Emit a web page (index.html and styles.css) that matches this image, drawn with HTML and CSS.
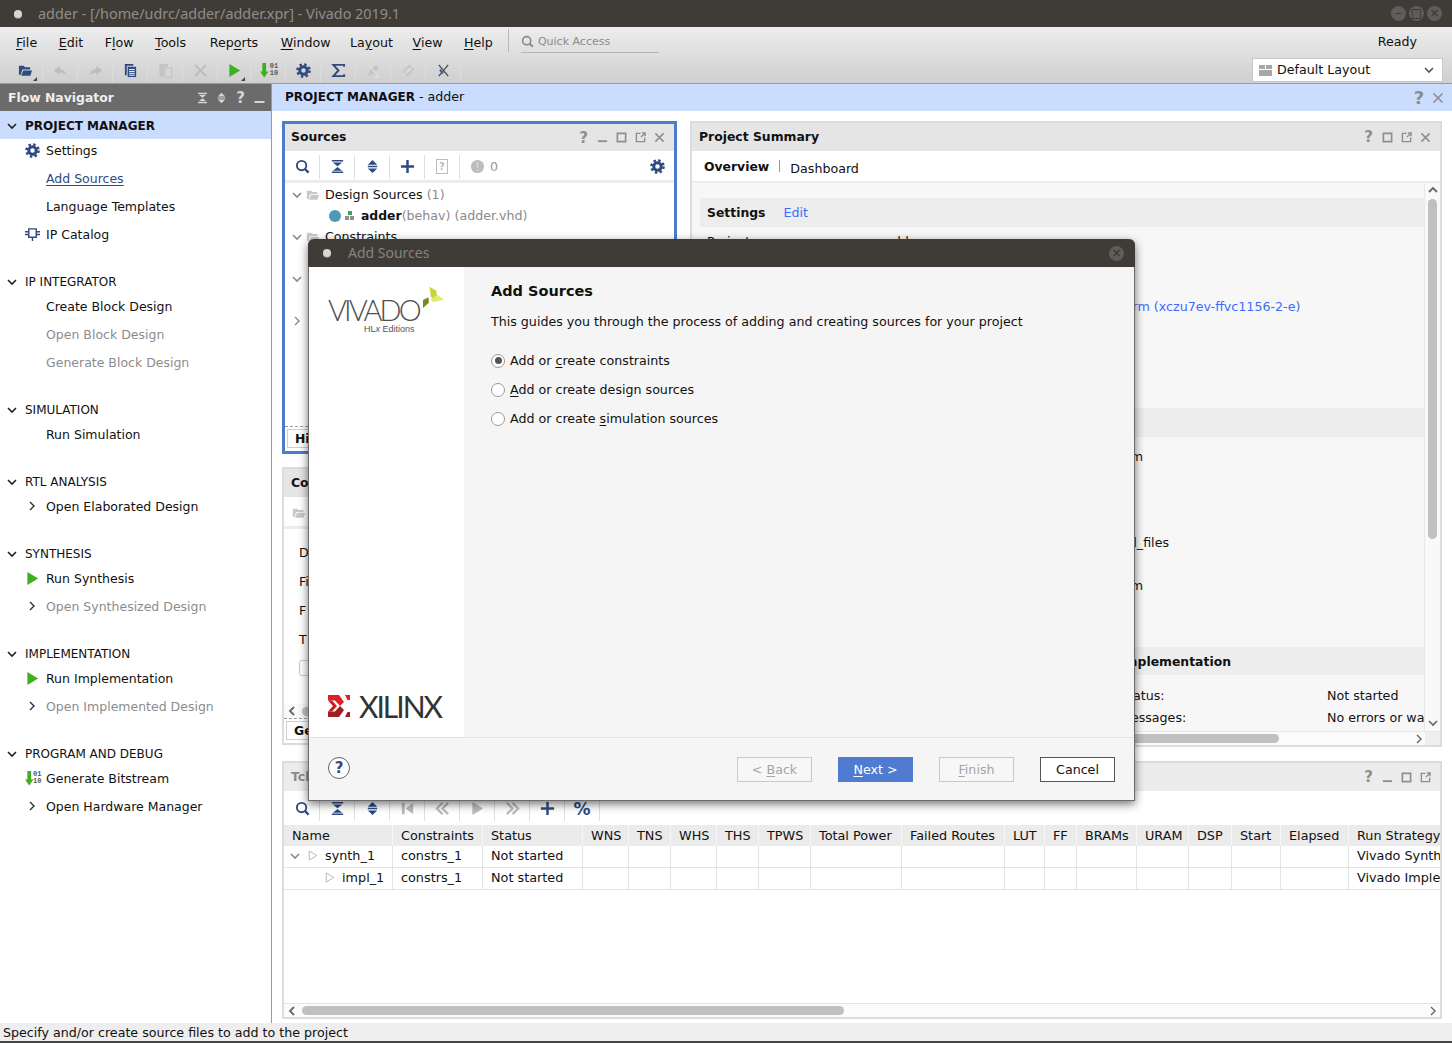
FILE: index.html
```html
<!DOCTYPE html>
<html>
<head>
    <title>adder - Vivado 2019.1</title>
    <link rel="stylesheet" href="styles.css">
</head>
<body>
    <svg class="defs" width="0" height="0">
        <symbol id="i-gear" viewBox="0 0 16 16"><circle cx="8" cy="8" r="4" fill="none" stroke="currentColor" stroke-width="3.2"/><circle cx="8" cy="8" r="6.5" fill="none" stroke="currentColor" stroke-width="2.6" stroke-dasharray="2.6 2.5"/></symbol>
        <symbol id="i-search" viewBox="0 0 16 16"><circle cx="7" cy="7" r="5" fill="none" stroke="currentColor" stroke-width="2"/><path d="M10.5 10.5L14.5 14.5" stroke="currentColor" stroke-width="2.4"/></symbol>
        <symbol id="i-collapse" viewBox="0 0 16 16"><path d="M2 1h12v1.6H2zM3 3.6h10L8 7.6zM3 12.4h10L8 8.4zM2 13.4h12v1.6H2z" fill="currentColor"/></symbol>
        <symbol id="i-expand" viewBox="0 0 16 16"><path d="M3 6L8 1l5 5zM3 7.2h10v1.6H3zM3 10h10l-5 5z" fill="currentColor"/></symbol>
        <symbol id="i-plus" viewBox="0 0 16 16"><path d="M6.7 1h2.6v5.7H15v2.6H9.3V15H6.7V9.3H1V6.7h5.7z" fill="currentColor"/></symbol>
        <symbol id="i-warn" viewBox="0 0 16 16"><circle cx="8" cy="8" r="7" fill="#bdbdbd"/><path d="M7.2 3.5h1.6v6H7.2zM7.2 10.8h1.6v1.7H7.2z" fill="#d8d8d8"/></symbol>
        <symbol id="i-folder" viewBox="0 0 16 16"><path d="M1 3h5l1.5 1.5H13V7H4.5L3 12.5H1z" fill="currentColor"/><path d="M5.5 8H15l-1.8 5.5H3.5z" fill="currentColor"/></symbol>
        <symbol id="i-undo" viewBox="0 0 16 16"><path d="M7 3L1 8l6 5v-3c3 0 5 .8 7 3-.5-4-3-6.5-7-7z" fill="currentColor"/></symbol>
        <symbol id="i-redo" viewBox="0 0 16 16"><path d="M9 3l6 5-6 5v-3c-3 0-5 .8-7 3 .5-4 3-6.5 7-7z" fill="currentColor"/></symbol>
        <symbol id="i-doc" viewBox="0 0 16 16"><path d="M2 1h9v2H4v10H2z" fill="currentColor"/><path d="M5 4h9v11H5z" fill="currentColor"/><path d="M6.5 7h6M6.5 9h6M6.5 11h6M6.5 13h6" stroke="#fff"/></symbol>
        <symbol id="i-paste" viewBox="0 0 16 16"><path d="M1.5 1h9v3H6v10H1.5z" fill="#c4c4c4"/><path d="M7 5h7.5v10H7z" fill="#d6d6d6" stroke="#c0c0c0"/></symbol>
        <symbol id="i-x" viewBox="0 0 16 16"><path d="M2 2l12 12M14 2L2 14" stroke="currentColor" stroke-width="2.2" fill="none"/></symbol>
        <symbol id="i-play" viewBox="0 0 16 16"><path d="M2.5 1l11.5 7-11.5 7z" fill="currentColor"/></symbol>
        <symbol id="i-sigma" viewBox="0 0 16 16"><path d="M14 4V2H2.500L8 8l-5.500 6H14v-2" fill="none" stroke="currentColor" stroke-width="2"/></symbol>
        <symbol id="i-check" viewBox="0 0 16 16"><path d="M2 14l3-7 6-5 3 3-5 6z" fill="#c6c6c6"/><path d="M9 15h6M3 3l10 10" stroke="#dedede" stroke-width="1.500"/></symbol>
        <symbol id="i-slash" viewBox="0 0 16 16"><path d="M3 9l6-6 4 4-6 6z" fill="none" stroke="#c6c6c6" stroke-width="2"/><path d="M2 14L14 2" stroke="#d8d8d8" stroke-width="1.500"/></symbol>
        <symbol id="i-probe" viewBox="0 0 16 16"><path d="M3 2l10 12M13 2L3 14" stroke="#555" stroke-width="1.600"/><path d="M5 6l3.500 4-2 2-3-4z" fill="#3f63a8"/></symbol>
        <symbol id="i-ipcat" viewBox="0 0 16 16"><path d="M4 2h8v9H4z" fill="none" stroke="currentColor" stroke-width="1.500"/><path d="M0 5h4M12 5h4M0 8h4M12 8h4M8 11v4" stroke="currentColor" stroke-width="1.500"/></symbol>
        <symbol id="i-down" viewBox="0 0 12 12"><path d="M2 4l4 4 4-4" fill="none" stroke="currentColor" stroke-width="1.600"/></symbol>
        <symbol id="i-right" viewBox="0 0 12 12"><path d="M4 2l4 4-4 4" fill="none" stroke="currentColor" stroke-width="1.400"/></symbol>
        <symbol id="i-left" viewBox="0 0 12 12"><path d="M8 2L4 6l4 4" fill="none" stroke="currentColor" stroke-width="1.800"/></symbol>
        <symbol id="i-up" viewBox="0 0 12 12"><path d="M2 8l4-4 4 4" fill="none" stroke="currentColor" stroke-width="1.800"/></symbol>
        <symbol id="i-min" viewBox="0 0 12 12"><path d="M1 10h10" stroke="currentColor" stroke-width="2"/></symbol>
        <symbol id="i-max" viewBox="0 0 12 12"><path d="M1.500 1.500h9v9h-9z" fill="none" stroke="currentColor" stroke-width="1.800"/></symbol>
        <symbol id="i-float" viewBox="0 0 12 12"><path d="M6 1.500H1.500v9h9V6M7.500 1h3.500v3.500M11 1L6.500 5.500" fill="none" stroke="currentColor" stroke-width="1.500"/></symbol>
        <symbol id="i-tri" viewBox="0 0 12 14"><path d="M1.500 1.500L10.500 7l-9 5.500z" fill="none" stroke="#aaa"/></symbol>
        <symbol id="i-rew" viewBox="0 0 16 16"><path d="M8 2L2 8l6 6M14 2L8 8l6 6" fill="none" stroke="currentColor" stroke-width="2.400"/></symbol>
        <symbol id="i-ff" viewBox="0 0 16 16"><path d="M2 2l6 6-6 6M8 2l6 6-6 6" fill="none" stroke="currentColor" stroke-width="2.400"/></symbol>
        <symbol id="i-first" viewBox="0 0 16 16"><path d="M2 2h3v12H2zM14 2v12L6 8z" fill="currentColor"/></symbol>
        <symbol id="i-layout" viewBox="0 0 13 11"><path d="M0 0h6v4H0zM7 0h6v4H7zM0 5h13v6H0z" fill="#a8a8a8"/></symbol>
        <symbol id="i-arrow" viewBox="0 0 16 16"><path d="M2.500 0h4v9h2.500l-4.500 6.500L0 9h2.500z" fill="#3cb01f"/></symbol>
    </svg>

    <div class="titlebar">
        <span class="app-dot"></span>
        <span class="title-text">adder - [/home/udrc/adder/adder.xpr] - Vivado 2019.1</span>
        <div class="win-controls">
            <span class="win-circle">&#8211;</span>
            <span class="win-circle">&#9633;</span>
            <span class="win-circle">&#215;</span>
        </div>
    </div>

    <div class="top">
        <div class="menubar">
            <span><u>F</u>ile</span>
            <span><u>E</u>dit</span>
            <span>F<u>l</u>ow</span>
            <span><u>T</u>ools</span>
            <span>Rep<u>o</u>rts</span>
            <span><u>W</u>indow</span>
            <span>La<u>y</u>out</span>
            <span><u>V</u>iew</span>
            <span><u>H</u>elp</span>
            <span class="menu-sep"></span>
            <span class="quick"><svg class="ic-quick"><use href="#i-search"/></svg> Quick Access</span>
            <span class="ready">Ready</span>
        </div>
        <div class="toolbar">
            <span class="tool navy corner"><svg><use href="#i-folder"/></svg></span>
            <span class="tool off"><svg><use href="#i-undo"/></svg></span>
            <span class="tool off"><svg><use href="#i-redo"/></svg></span>
            <span class="tool navy"><svg><use href="#i-doc"/></svg></span>
            <span class="tool"><svg><use href="#i-paste"/></svg></span>
            <span class="tool off"><svg><use href="#i-x"/></svg></span>
            <span class="tool corner green tight"><svg><use href="#i-play"/></svg></span>
            <span class="tool bits-tool"><svg class="bits-arrow"><use href="#i-arrow"/></svg><span class="bits"><i>01</i><i>10</i></span></span>
            <span class="tool navy"><svg><use href="#i-gear"/></svg></span>
            <span class="tool navy"><svg><use href="#i-sigma"/></svg></span>
            <span class="tool"><svg><use href="#i-check"/></svg></span>
            <span class="tool"><svg><use href="#i-slash"/></svg></span>
            <span class="tool"><svg><use href="#i-probe"/></svg></span>
            <div class="layout-select">
                <svg class="ic-layout"><use href="#i-layout"/></svg>
                <span>Default Layout</span>
                <svg class="ic-chev"><use href="#i-down"/></svg>
            </div>
        </div>
    </div>

    <div class="main">
        <div class="nav">
            <div class="nav-head">
                <span class="nav-title">Flow Navigator</span>
                <span class="btn-row">
                    <svg class="btn"><use href="#i-collapse"/></svg>
                    <svg class="btn"><use href="#i-expand"/></svg>
                    <b class="btn q">?</b>
                    <svg class="btn"><use href="#i-min"/></svg>
                </span>
            </div>

            <div class="nav-sec active"><svg class="sec-chev"><use href="#i-down"/></svg>PROJECT MANAGER</div>
            <div class="nav-item"><svg class="nav-ic navy"><use href="#i-gear"/></svg>Settings</div>
            <div class="nav-item link"><span class="lnk">Add Sources</span></div>
            <div class="nav-item">Language Templates</div>
            <div class="nav-item"><svg class="nav-ic navy"><use href="#i-ipcat"/></svg>IP Catalog</div>

            <div class="nav-sec"><svg class="sec-chev"><use href="#i-down"/></svg>IP INTEGRATOR</div>
            <div class="nav-item">Create Block Design</div>
            <div class="nav-item dim">Open Block Design</div>
            <div class="nav-item dim">Generate Block Design</div>

            <div class="nav-sec"><svg class="sec-chev"><use href="#i-down"/></svg>SIMULATION</div>
            <div class="nav-item">Run Simulation</div>

            <div class="nav-sec"><svg class="sec-chev"><use href="#i-down"/></svg>RTL ANALYSIS</div>
            <div class="nav-item"><svg class="nav-arrow"><use href="#i-right"/></svg>Open Elaborated Design</div>

            <div class="nav-sec"><svg class="sec-chev"><use href="#i-down"/></svg>SYNTHESIS</div>
            <div class="nav-item"><svg class="nav-ic green"><use href="#i-play"/></svg>Run Synthesis</div>
            <div class="nav-item dim"><svg class="nav-arrow"><use href="#i-right"/></svg>Open Synthesized Design</div>

            <div class="nav-sec"><svg class="sec-chev"><use href="#i-down"/></svg>IMPLEMENTATION</div>
            <div class="nav-item"><svg class="nav-ic green"><use href="#i-play"/></svg>Run Implementation</div>
            <div class="nav-item dim"><svg class="nav-arrow"><use href="#i-right"/></svg>Open Implemented Design</div>

            <div class="nav-sec"><svg class="sec-chev"><use href="#i-down"/></svg>PROGRAM AND DEBUG</div>
            <div class="nav-item"><svg class="nav-ic"><use href="#i-arrow"/></svg><span class="bits nav-bits"><i>01</i><i>10</i></span>Generate Bitstream</div>
            <div class="nav-item"><svg class="nav-arrow"><use href="#i-right"/></svg>Open Hardware Manager</div>
        </div>

        <div class="content">
            <div class="content-head">
                <span><b>PROJECT MANAGER</b> - adder</span>
                <span class="head-btns"><b class="q">?</b><svg class="head-x"><use href="#i-x"/></svg></span>
            </div>

            <div class="work">
                <div class="upper">
                    <div class="left-col">
                        <div class="panel selected sources">
                            <div class="panel-title">
                                <span>Sources</span>
                                <span class="win-btns"><b class="q">?</b><svg><use href="#i-min"/></svg><svg><use href="#i-max"/></svg><svg><use href="#i-float"/></svg><svg><use href="#i-x"/></svg></span>
                            </div>
                            <div class="panel-tools">
                                <span class="ptool"><svg><use href="#i-search"/></svg></span>
                                <span class="ptool"><svg><use href="#i-collapse"/></svg></span>
                                <span class="ptool"><svg><use href="#i-expand"/></svg></span>
                                <span class="ptool"><svg><use href="#i-plus"/></svg></span>
                                <span class="ptool off"><span class="qfile">?</span></span>
                                <span class="ptool"><svg><use href="#i-warn"/></svg></span>
                                <span class="count">0</span>
                                <svg class="tools-gear"><use href="#i-gear"/></svg>
                            </div>
                            <div class="tree">
                                <div class="tree-row"><svg class="tree-chev"><use href="#i-down"/></svg><svg class="tree-folder"><use href="#i-folder"/></svg>Design Sources <span class="grey">&nbsp;(1)</span></div>
                                <div class="tree-row leaf"><span class="dot"></span><span class="hier"><i class="g"></i><i></i><i></i></span><b>adder</b><span class="grey">(behav) (adder.vhd)</span></div>
                                <div class="tree-row"><svg class="tree-chev"><use href="#i-down"/></svg><svg class="tree-folder"><use href="#i-folder"/></svg>Constraints</div>
                                <div class="tree-row"></div>
                                <div class="tree-row"><svg class="tree-chev"><use href="#i-down"/></svg></div>
                                <div class="tree-row"></div>
                                <div class="tree-row"><svg class="tree-chev"><use href="#i-right"/></svg></div>
                            </div>
                            <div class="tabs"><span class="tab">Hierarchy</span></div>
                        </div>

                        <div class="panel props">
                            <div class="panel-title"><span>Code</span></div>
                            <div class="panel-tools small"><svg class="tree-folder"><use href="#i-folder"/></svg></div>
                            <div class="prop-rows">
                                <div>D</div>
                                <div>Fi</div>
                                <div>F</div>
                                <div>T</div>
                                <div class="prop-check"></div>
                            </div>
                            <div class="mini-scroll"><svg><use href="#i-left"/></svg><i></i></div>
                            <div class="tabs"><span class="tab">General</span></div>
                        </div>
                    </div>

                    <div class="panel summary">
                        <div class="panel-title">
                            <span>Project Summary</span>
                            <span class="win-btns"><b class="q">?</b><svg><use href="#i-max"/></svg><svg><use href="#i-float"/></svg><svg><use href="#i-x"/></svg></span>
                        </div>
                        <div class="sum-tabs">
                            <b>Overview</b><span class="tab-sep"></span><span>Dashboard</span>
                        </div>
                        <div class="sum-main">
                            <div class="sum-scroll">
                                <div class="sum-sec first">
                                    <div class="sum-bar"><b>Settings</b><span class="blue">Edit</span></div>
                                    <div class="sum-rows">
                                        <div class="sum-row"><span>Project name:</span><span>adder</span></div>
                                        <div class="sum-row"><span>Project location:</span><span>/home/udrc/adder</span></div>
                                        <div class="sum-row"><span>Product family:</span><span>Zynq UltraScale+</span></div>
                                        <div class="sum-row"><span>Project part:</span><span class="blue part">Zynq UltraScale+ ZCU104 Board Platform (xczu7ev-ffvc1156-2-e)</span></div>
                                        <div class="sum-row"><span>Top module name:</span><span class="blue">adder</span></div>
                                    </div>
                                </div>
                                <div class="sum-sec second">
                                    <div class="sum-bar"><b>Board Part</b></div>
                                    <div class="sum-rows ends">
                                        <div class="sum-end">Display name: adder_system</div>
                                        <div class="sum-end">&nbsp;</div>
                                        <div class="sum-end">&nbsp;</div>
                                        <div class="sum-end">&nbsp;</div>
                                        <div class="sum-end far">Repository path: added_files</div>
                                        <div class="sum-end">&nbsp;</div>
                                        <div class="sum-end">Connectors: adder_system</div>
                                    </div>
                                </div>
                                <div class="sum-sec third">
                                    <div class="sum-bar split"><b>Synthesis</b><b>Implementation</b></div>
                                    <div class="sum-split">
                                        <span>Status:</span><span>Not started</span><span>Status:</span><span>Not started</span>
                                        <span>Messages:</span><span>No errors or warnings</span><span>Messages:</span><span>No errors or warnings</span>
                                    </div>
                                </div>
                            </div>
                            <div class="vbar">
                                <svg><use href="#i-up"/></svg>
                                <i></i>
                                <svg class="vbar-down"><use href="#i-down"/></svg>
                            </div>
                        </div>
                        <div class="hbar">
                            <i></i>
                            <svg><use href="#i-right"/></svg>
                            <span class="hbar-corner"></span>
                        </div>
                    </div>
                </div>

                <div class="panel lower">
                    <div class="panel-title lite">
                        <span class="grey">Tcl Console</span>
                        <span class="win-btns"><b class="q">?</b><svg><use href="#i-min"/></svg><svg><use href="#i-max"/></svg><svg><use href="#i-float"/></svg></span>
                    </div>
                    <div class="panel-tools plain">
                        <span class="ptool"><svg><use href="#i-search"/></svg></span>
                        <span class="ptool"><svg><use href="#i-collapse"/></svg></span>
                        <span class="ptool"><svg><use href="#i-expand"/></svg></span>
                        <span class="ptool off"><svg><use href="#i-first"/></svg></span>
                        <span class="ptool off"><svg><use href="#i-rew"/></svg></span>
                        <span class="ptool off"><svg><use href="#i-play"/></svg></span>
                        <span class="ptool off"><svg><use href="#i-ff"/></svg></span>
                        <span class="ptool"><svg><use href="#i-plus"/></svg></span>
                        <span class="ptool pct">%</span>
                    </div>
                    <div class="runs">
                        <div class="runs-row head">
                            <span>Name</span><span>Constraints</span><span>Status</span><span>WNS</span><span>TNS</span><span>WHS</span><span>THS</span><span>TPWS</span><span>Total Power</span><span>Failed Routes</span><span>LUT</span><span>FF</span><span>BRAMs</span><span>URAM</span><span>DSP</span><span>Start</span><span>Elapsed</span><span>Run Strategy</span>
                        </div>
                        <div class="runs-row">
                            <span class="run-name"><svg class="run-chev"><use href="#i-down"/></svg><svg class="run-tri"><use href="#i-tri"/></svg>synth_1</span><span>constrs_1</span><span>Not started</span><span></span><span></span><span></span><span></span><span></span><span></span><span></span><span></span><span></span><span></span><span></span><span></span><span></span><span></span><span>Vivado Synthesis Defaults</span>
                        </div>
                        <div class="runs-row">
                            <span class="run-name sub"><svg class="run-tri"><use href="#i-tri"/></svg>impl_1</span><span>constrs_1</span><span>Not started</span><span></span><span></span><span></span><span></span><span></span><span></span><span></span><span></span><span></span><span></span><span></span><span></span><span></span><span></span><span>Vivado Implementation Defaults</span>
                        </div>
                    </div>
                    <div class="bottom-scroll">
                        <svg><use href="#i-left"/></svg>
                        <i></i>
                        <svg class="end"><use href="#i-right"/></svg>
                    </div>
                </div>
            </div>
        </div>
    </div>

    <div class="statusbar">Specify and/or create source files to add to the project</div>

    <div class="dialog">
        <div class="dialog-title">
            <span class="app-dot"></span>
            <span class="dialog-name">Add Sources</span>
            <span class="win-circle dialog-close">&#215;</span>
        </div>
        <div class="dialog-body">
            <div class="dialog-side">
                <div class="vivado">
                    <span class="vivado-word">VIVADO</span>
                    <svg class="leaves" viewBox="0 0 30 30"><path d="M8 1l8.700 5 1.700 13.300L10 13.700z" fill="#c9d23f"/><path d="M0 17.500l7-3.300 0 0L7.300 21 0 27.500z" fill="#7d8a1a"/><path d="M9 17l9-5.700 8.300 5.700-13.300 3.300z" fill="#e4e96f"/></svg>
                    <span class="hlx">HL<i>x</i> Editions</span>
                </div>
                <div class="xilinx">
                    <svg class="x-mark" viewBox="0 0 22 22">
                        <path d="M0 0h11l5 7-4 4-5-5.500H0z" fill="#e31f26"/>
                        <path d="M17 0h5v5h-2.500z" fill="#e31f26"/>
                        <path d="M0 5.500h4L9 11l-5 5.500H0L5 11z" fill="#c41e26"/>
                        <path d="M0 22h11l5-7-4-4-5 5.500H0z" fill="#a21c22"/>
                        <path d="M17 22h5v-5h-2.500z" fill="#a21c22"/>
                    </svg>
                    <span class="xilinx-word">XILINX</span>
                </div>
            </div>
            <div class="dialog-main">
                <h1>Add Sources</h1>
                <p>This guides you through the process of adding and creating sources for your project</p>
                <div class="radio"><span class="radio-mark on"></span><span>Add or <u>c</u>reate constraints</span></div>
                <div class="radio"><span class="radio-mark"></span><span><u>A</u>dd or create design sources</span></div>
                <div class="radio"><span class="radio-mark"></span><span>Add or create <u>s</u>imulation sources</span></div>
            </div>
        </div>
        <div class="dialog-foot">
            <span class="help-circle">?</span>
            <div class="dialog-btns">
                <span class="dbtn off">&lt; <u>B</u>ack</span>
                <span class="dbtn primary"><u>N</u>ext &gt;</span>
                <span class="dbtn off"><u>F</u>inish</span>
                <span class="dbtn cancel">Cancel</span>
            </div>
        </div>
    </div>
</body>
</html>
```

FILE: styles.css
```css
* { box-sizing: border-box; }
html, body { margin: 0; padding: 0; }
body { position: relative; width: 1452px; height: 1043px; overflow: hidden; background: #fff; color: #111; font: 12.650px "DejaVu Sans", sans-serif; }
b { font-size: 12.400px; }
u { text-underline-offset: 2px; }
i { font-style: normal; }
svg { display: block; flex: none; }
.defs { position: absolute; }
.navy { color: #2f4a80; }
.green { color: #3cb01f; }
.grey { color: #8a8a8a; }
.blue { color: #3b6cff; }
.q { color: #8e8e8e; font-size: 15px; text-align: center; }

/* window title */
.titlebar { height: 27px; background: #3f3c38; display: flex; align-items: center; padding-left: 14px; }
.app-dot { width: 8px; height: 8px; border-radius: 50%; background: #d8d6d0; box-shadow: 0 1px 0 #777; flex: none; }
.title-text { margin-left: 16px; color: #8f8d87; font: 14.400px "Noto Sans", sans-serif; }
.win-controls { margin-left: auto; margin-right: 10px; display: flex; gap: 3px; }
.win-circle { width: 15px; height: 15px; border-radius: 50%; background: #5f5d59; color: #33312e; font-size: 12px; line-height: 14px; text-align: center; }

/* menu and toolbar */
.top { height: 57px; background: linear-gradient(#ededed, #cfcfcf); border-bottom: 1px solid #9c9c9c; }
.menubar { height: 30px; display: flex; align-items: center; gap: 21.500px; padding-left: 16px; padding-top: 1px; }
.menubar span:nth-child(5) { margin-left: 2px; }
.menubar span:nth-child(6) { margin-left: 1px; }
.menubar span:nth-child(7) { margin-left: -2px; }
.menubar span:nth-child(8) { margin-left: -2px; }
.menu-sep { width: 1px; height: 23px; background: #b9b9b9; margin-left: -6px; margin-top: -4px; }
.quick { width: 138px; margin-left: -10px; border-bottom: 1px solid #b5b5b5; color: #8a8a8a; font-size: 11px; display: flex; align-items: center; gap: 4px; height: 22px; margin-top: -2px; }
.ic-quick { width: 13px; height: 13px; color: #8a8a8a; }
.ready { margin-left: auto; margin-right: 35px; margin-top: -2px; }
.toolbar { height: 26px; display: flex; align-items: center; padding-left: 8px; }
.tool { position: relative; width: 35px; height: 24px; display: flex; align-items: center; justify-content: center; color: #bdbdbd; border-right: 1px solid #dcdcdc; flex: none; }
.tool > svg { width: 15px; height: 15px; }
.tool.navy { color: #2f4a80; }
.tool.green { color: #3cb01f; }
.tool.tight { width: 33px; }
.corner::after { content: ""; position: absolute; right: 5px; bottom: 1px; border-left: 4px solid transparent; border-bottom: 4px solid #444; }
.bits-tool { gap: 1px; }
.tool > .bits-arrow { margin-right: -6px; margin-left: 2px; }
.bits { display: flex; flex-direction: column; font: bold 7px/7px "Liberation Mono", monospace; color: #555; }
.nav-bits { position: absolute; left: 33px; top: 7px; }
.layout-select { margin-left: auto; margin-right: 9px; width: 191px; height: 24px; background: #fff; border: 1px solid #c9c9c9; display: flex; align-items: center; padding: 0 7px 0 6px; gap: 5px; }
.layout-select span { margin-top: -1px; }
.ic-layout { width: 13px; height: 11px; }
.ic-chev { width: 12px; height: 12px; margin-left: auto; color: #555; }

/* layout */
.main { height: 939px; display: flex; }
.statusbar { height: 20px; background: #eee; border-bottom: 2px solid #444; padding-left: 3px; line-height: 19px; }

/* flow navigator */
.nav { width: 272px; border-right: 1px solid #9a9a9a; flex: none; }
.nav-head { height: 27px; background: #6b6b6b; color: #eee; display: flex; align-items: center; padding-left: 8px; }
.nav-title { font-weight: bold; font-size: 12.400px; }
.btn-row { margin-left: auto; display: flex; align-items: center; margin-right: 2px; }
.btn { width: 19px; height: 12px; color: #d5d5d5; }
b.btn { color: #d5d5d5; height: auto; font-size: 15px; }
.nav-sec { height: 22px; margin-top: 22px; padding-top: 2px; display: flex; align-items: center; font-size: 12px; }
.nav-sec.active { height: 28px; margin-top: 0; margin-bottom: -3px; background: #cbddff; font-weight: bold; }
.sec-chev { width: 12px; height: 12px; margin: 0 7px 0 6px; color: #222; }
.nav-item { position: relative; height: 28px; line-height: 30px; padding-left: 46px; font-size: 12.500px; }
.nav-item.dim { color: #8c8c8c; }
.lnk { color: #2f4a80; text-decoration: underline; text-underline-offset: 2px; }
.nav-ic { position: absolute; left: 25px; top: 7px; width: 15px; height: 15px; }
.nav-arrow { position: absolute; left: 26px; top: 8px; width: 12px; height: 12px; color: #333; }

/* right side */
.content { flex: 1; min-width: 0; }
.content-head { height: 27px; background: #cbddff; display: flex; align-items: center; padding-left: 13px; padding-bottom: 2px; }
.content-head b { font-size: 12px; }
.head-btns { margin-left: auto; display: flex; align-items: center; gap: 7px; margin-right: 8px; margin-top: 2px; }
.head-btns .q { font-size: 18px; width: 12px; }
.head-x { width: 12px; height: 12px; color: #8e8e8e; }
.work { padding: 10px 10px 0; }
.upper { height: 626px; display: flex; gap: 13px; }
.left-col { width: 395px; display: flex; flex-direction: column; gap: 13px; flex: none; }

/* panels */
.panel { border: 2px solid #dcdcdc; display: flex; flex-direction: column; overflow: hidden; background: #fff; }
.panel.selected { border: 3px solid #4e7cc9; }
.sources { height: 333px; }
.props { height: 278px; }
.summary { flex: 1; min-width: 0; }
.lower { height: 258px; margin-top: 14px; }
.panel-title { height: 28px; background: #e5e5e5; display: flex; align-items: center; padding: 0 5px 2px 7px; font-weight: bold; font-size: 12.400px; flex: none; }
.panel-title.lite { background: #ececec; }
.sources .panel-title { height: 27px; padding-left: 6px; }
.win-btns { margin-left: auto; display: flex; align-items: center; font-weight: bold; margin-top: 2px; }
.win-btns svg { width: 19px; height: 11px; color: #8e8e8e; }
.win-btns .q { width: 19px; }
.panel-tools { height: 32px; padding-top: 2px; border-bottom: 3px solid #ededed; display: flex; align-items: center; flex: none; }
.panel-tools.plain { border-bottom: 0; height: 33px; padding-left: 1px; }
.ptool { width: 35px; height: 24px; display: flex; align-items: center; justify-content: center; color: #2f4a80; border-right: 1px solid #dedede; flex: none; }
.ptool svg { width: 15px; height: 15px; }
.ptool.off { color: #bcbcbc; }
.ptool:nth-child(6) { border-right: 0; }
.plain .ptool:nth-child(6) { border-right: 1px solid #dedede; }
.qfile { width: 12px; height: 15px; border: 1px solid #bcbcbc; font-size: 10px; font-weight: bold; line-height: 13px; text-align: center; }
.pct { font-size: 17px; font-weight: bold; }
.count { color: #999; margin-left: -5px; }
.tools-gear { width: 15px; height: 15px; margin-left: auto; margin-right: 9px; color: #2f4a80; }
.panel-tools.small { padding-left: 5px; }

/* sources tree */
.tree { flex: 1; padding-top: 1px; }
.tree-row { height: 21px; display: flex; align-items: center; padding-left: 6px; white-space: nowrap; }
.tree-chev { width: 12px; height: 12px; color: #8a8a8a; }
.tree-folder { width: 14px; height: 14px; color: #c8c8c8; margin-left: 3px; margin-right: 5px; }
.leaf { padding-left: 44px; }
.dot { width: 12px; height: 12px; border-radius: 50%; background: #4a9ab5; margin-right: 3px; flex: none; }
.hier { width: 11px; height: 9px; position: relative; margin-right: 6px; display: grid; grid-template-columns: 4px 4px; gap: 1px 1px; justify-content: center; }
.hier i { background: #8f8f8f; height: 4px; }
.hier .g { background: #3aa655; grid-column: 1 / span 2; width: 4px; justify-self: center; }
.tabs { height: 25px; border-top: 1px dashed #9a9a9a; padding: 2px 0 0 2px; flex: none; }
.tab { display: inline-block; height: 19px; padding: 0 7px; border: 1px solid #cfcfcf; font-weight: bold; font-size: 12.400px; line-height: 18px; }
.prop-rows { flex: 1; padding: 9px 0 0 15px; }
.prop-rows div { height: 29px; line-height: 29px; }
.prop-check { width: 12px; margin-top: 6px; height: 16px !important; border: 1px solid #c9c9c9; border-radius: 3px; }
.mini-scroll { height: 14px; display: flex; align-items: center; padding-left: 2px; flex: none; background: #f9f9f9; color: #666; }
.mini-scroll svg { width: 12px; height: 12px; }
.mini-scroll i { width: 200px; height: 9px; border-radius: 5px; background: #c0c0c0; margin-left: 4px; }

/* project summary */
.sum-tabs { height: 32px; border-bottom: 2px solid #ececec; display: flex; align-items: center; padding-left: 12px; flex: none; }
.sum-tabs span:last-child { padding-top: 4px; }
.tab-sep { width: 1px; height: 12px; background: #999; margin: 0 10px; }
.sum-main { flex: 1; min-height: 0; display: flex; }
.sum-scroll { flex: 1; min-width: 0; background: #f7f7f7; padding: 15px 0 0 8px; overflow: hidden; border-right: 1px solid #e8e8e8; }
.sum-sec { overflow: hidden; white-space: nowrap; }
.sum-sec.first { height: 210px; }
.sum-sec.second { height: 239px; }
.sum-bar { height: 29px; background: #ededed; display: flex; align-items: center; gap: 18px; padding-left: 7px; }
.sum-bar.split { height: 28px; gap: 0; }
.sum-bar.split b { width: 413px; flex: none; }
.sum-rows { padding: 4px 0 0 7px; }
.sum-row { height: 21.500px; line-height: 21.500px; display: flex; }
.sum-row span:first-child { width: 178px; flex: none; }
.sum-rows.ends { padding-top: 9px; }
.sum-end { height: 21.500px; line-height: 21.500px; text-align: right; padding-right: 281px; }
.sum-end.far { padding-right: 255px; }
.sum-split { display: grid; grid-template-columns: 207px 206px 207px 120px; padding: 10px 0 0 7px; grid-auto-rows: 21.500px; line-height: 21.500px; }
.vbar { width: 15px; background: #f9f9f9; display: flex; flex-direction: column; align-items: center; color: #666; flex: none; padding-top: 1px; }
.vbar svg { width: 12px; height: 12px; }
.vbar i { width: 9px; height: 340px; background: #c0c0c0; border-radius: 5px; margin-top: 3px; }
.vbar-down { margin-top: auto; margin-bottom: 2px; }
.hbar { height: 14px; display: flex; align-items: center; background: #fbfbfb; border-top: 1px solid #e8e8e8; flex: none; color: #666; }
.hbar i { width: 587px; height: 9px; border-radius: 5px; background: #c0c0c0; }
.hbar svg { width: 12px; height: 12px; margin-left: auto; }
.hbar-corner { width: 15px; height: 13px; background: #eee; }

/* design runs table */
.runs { flex: 1; min-height: 0; padding-top: 1px; overflow: hidden; font-size: 12.800px; }
.runs-row { display: grid; grid-template-columns: 109px 90px 100px 46px 42px 46px 42px 52px 91px 103px 40px 32px 60px 52px 43px 49px 68px 91px; height: 22px; border-bottom: 1px solid #e4e4e4; white-space: nowrap; }
.runs-row.head { height: 21px; background: #ebebeb; border-bottom: 0; }
.runs-row span { padding-left: 8px; line-height: 19px; overflow: hidden; border-right: 1px solid #e4e4e4; }
.runs-row.head span { border-right: 1px solid #f7f7f7; line-height: 22px; }
.runs-row span:last-child { border-right: 0; }
.runs-row .run-name { display: flex; align-items: center; padding-left: 5px; padding-bottom: 2px; }
.run-name.sub { padding-left: 41px; }
.run-chev { width: 12px; height: 12px; color: #8a8a8a; margin-right: 7px; }
.run-tri { width: 10px; height: 13px; margin-right: 7px; }
.bottom-scroll { height: 14px; border-top: 1px solid #e4e4e4; background: #fbfbfb; display: flex; align-items: center; padding-left: 2px; color: #666; flex: none; }
.bottom-scroll svg { width: 12px; height: 12px; }
.bottom-scroll i { width: 542px; height: 9px; border-radius: 5px; background: #c0c0c0; margin-left: 4px; }
.bottom-scroll .end { margin-left: auto; margin-right: 1px; }

/* add sources dialog */
.dialog { position: absolute; left: 308px; top: 239px; width: 827px; height: 562px; background: #f5f5f5; border-radius: 6px 6px 0 0; border: 1px solid #6b6b6b; border-top: 0; box-shadow: 0 3px 10px rgba(0, 0, 0, .55); display: flex; flex-direction: column; }
.dialog-title { height: 28px; background: #3f3c38; border-radius: 6px 6px 0 0; margin: 0 -1px; display: flex; align-items: center; padding-left: 15px; flex: none; }
.dialog-name { margin-left: 17px; margin-top: -2px; color: #85837d; font: 14px "Noto Sans", sans-serif; }
.dialog-close { margin-left: auto; margin-right: 11px; }
.dialog-body { height: 470px; display: flex; flex: none; }
.dialog-side { width: 155px; background: #fff; display: flex; flex-direction: column; justify-content: space-between; padding: 0 0 17px 19px; flex: none; }
.vivado { position: relative; height: 70px; }
.vivado-word { position: absolute; left: 0; top: 31px; font: 300 29px/24px "Lato", sans-serif; color: #4f4f4f; letter-spacing: -2.900px; }
.leaves { position: absolute; left: 95px; top: 19px; width: 24px; height: 24px; }
.hlx { position: absolute; left: 36px; top: 57px; font: 9px/10px "Liberation Sans", sans-serif; color: #555; }
.hlx i { font-style: italic; }
.xilinx { display: flex; align-items: center; gap: 9px; height: 28px; }
.x-mark { width: 22px; height: 22px; }
.xilinx-word { font: 30px/28px "Lato", sans-serif; color: #333; letter-spacing: -2px; }
.dialog-main { flex: 1; padding: 15px 0 0 27px; }
.dialog-main h1 { margin: 0; font-size: 14.500px; font-weight: bold; line-height: 18px; }
.dialog-main p { margin: 13px 0 0; line-height: 18px; }
.radio { display: flex; align-items: center; gap: 5px; height: 29px; }
.dialog-main p + .radio { margin-top: 15px; }
.radio-mark { width: 14px; height: 14px; border: 1px solid #9a9a9a; border-radius: 50%; background: #fff; flex: none; display: flex; align-items: center; justify-content: center; }
.radio-mark.on::after { content: ""; width: 7px; height: 7px; border-radius: 50%; background: #555; }
.dialog-foot { flex: 1; border-top: 1px solid #e3e3e3; display: flex; align-items: center; padding: 0 19px; }
.help-circle { width: 22px; height: 22px; margin-top: -3px; border: 1px solid #666; border-radius: 50%; background: #fff; color: #2f4a80; font-weight: bold; font-size: 15px; line-height: 20px; text-align: center; }
.dialog-btns { margin-left: auto; display: flex; gap: 26px; }
.dbtn { width: 75px; height: 25px; border: 1px solid #c9c9c9; background: #f7f7f7; text-align: center; line-height: 23px; }
.dbtn.off { color: #a5a5a5; }
.dbtn.primary { background: #4f7bd1; border-color: #4f7bd1; color: #fff; }
.dbtn.cancel { background: #fff; border-color: #555; }
```
